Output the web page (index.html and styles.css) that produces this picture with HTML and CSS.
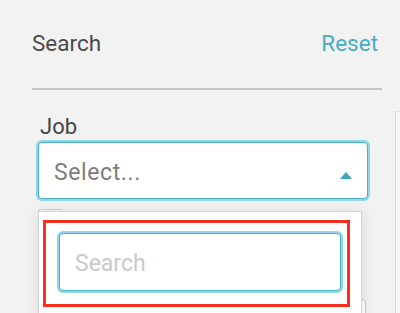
FILE: index.html
```html
<!DOCTYPE html>
<html lang="en">

<head>
    <meta charset="UTF-8">
    <meta name="viewport" content="width=device-width, initial-scale=1.0">
    <title>Search</title>
    <link rel="stylesheet" href="styles.css">
</head>

<body>
    <div class="page">
        <aside class="sidebar">
            <div class="sidebar-head">
                <h2>Search</h2>
                <a class="reset" href="#">Reset</a>
            </div>

            <div class="field">
                <label class="field-label">Job</label>
                <div class="select-wrap">
                    <div class="select is-open">
                        <span class="select-value">Select...</span>
                        <span class="caret"></span>
                    </div>
                    <div class="menu">
                        <input class="menu-search" type="text" placeholder="Search">
                        <span class="highlight"></span>
                    </div>
                </div>
                <div class="toggle"></div>
                <div class="next-field"></div>
            </div>
        </aside>

        <div class="results"></div>
    </div>
</body>

</html>
```

FILE: styles.css
```css
body {
    margin: 0;
    font-family: Roboto, "Liberation Sans", sans-serif;
    background-color: #f2f2f2;
    overflow: hidden;
    height: 313px;
}

.page {
    display: flex;
    align-items: flex-start;
}

.sidebar {
    margin-left: 32px;
    width: 350px;
    flex-shrink: 0;
}

.sidebar-head {
    display: flex;
    justify-content: space-between;
    align-items: baseline;
    padding: 30px 4px 32px 0;
    border-bottom: 2px solid #c4c4c4;
}

.sidebar-head h2 {
    margin: 0;
    font-size: 22.5px;
    font-weight: 400;
    line-height: 26px;
    color: #4a4a4a;
}

.reset {
    font-size: 22.5px;
    line-height: 26px;
    color: #45aec3;
    text-decoration: none;
}

.field {
    margin-left: 6px;
    width: 330px;
    padding-top: 24px;
}

.field-label {
    display: block;
    margin-left: 2px;
    margin-bottom: 2px;
    font-size: 22px;
    line-height: 26px;
    color: #444;
}

.select-wrap {
    position: relative;
}

.select {
    display: flex;
    align-items: center;
    justify-content: space-between;
    height: 57px;
    box-sizing: border-box;
    padding: 3px 15px 0 15px;
    background: white;
    border: 1px solid #c8c8c8;
    border-radius: 4px;
}

.select.is-open {
    border-color: #4bb0c4;
    box-shadow: 0 0 0 2px #8fd7e8;
}

.select-value {
    font-size: 23px;
    letter-spacing: 0.6px;
    color: #7d7d7d;
}

.caret {
    width: 0;
    height: 0;
    margin-top: 7px;
    border-left: 6px solid transparent;
    border-right: 6px solid transparent;
    border-bottom: 7px solid #3fa6bb;
}

.menu {
    position: absolute;
    top: calc(100% + 12px);
    left: 0;
    z-index: 2;
    width: 324px;
    height: 102px;
    box-sizing: border-box;
    padding: 21px 20px 0 20px;
    background: white;
    border: 1px solid #d6d6d6;
    border-bottom: none;
    box-shadow: 0 2px 12px rgba(0, 0, 0, 0.12);
}

.menu-search {
    display: block;
    width: 100%;
    height: 58px;
    box-sizing: border-box;
    padding: 3px 15px 0 15px;
    font-family: inherit;
    font-size: 23px;
    border: 1px solid #4bb0c4;
    border-radius: 4px;
    box-shadow: 0 0 0 2px #8fd7e8;
    outline: none;
}

.menu-search::placeholder {
    color: #c9c9c9;
}

.highlight {
    position: absolute;
    left: 4px;
    top: 8px;
    width: 307px;
    height: 87px;
    box-sizing: border-box;
    border: 3px solid #fb2f1d;
    pointer-events: none;
}

.toggle {
    margin-top: 10px;
    width: 25px;
    height: 24px;
    box-sizing: border-box;
    background: #fafafa;
    border: 1px solid #cfcfcf;
    border-radius: 3px;
}

.next-field {
    margin-top: 66px;
    width: 328px;
    height: 14px;
    box-sizing: border-box;
    background: white;
    border: 1px solid #c8c8c8;
    border-bottom: none;
    border-radius: 4px 4px 0 0;
}

.results {
    margin-left: 13px;
    margin-top: 111px;
    flex: 1;
    height: 202px;
    box-sizing: border-box;
    background: #f7f7f7;
    border-left: 1px solid #d9d9d9;
    border-top: 1px solid #e4e4e4;
}
```
